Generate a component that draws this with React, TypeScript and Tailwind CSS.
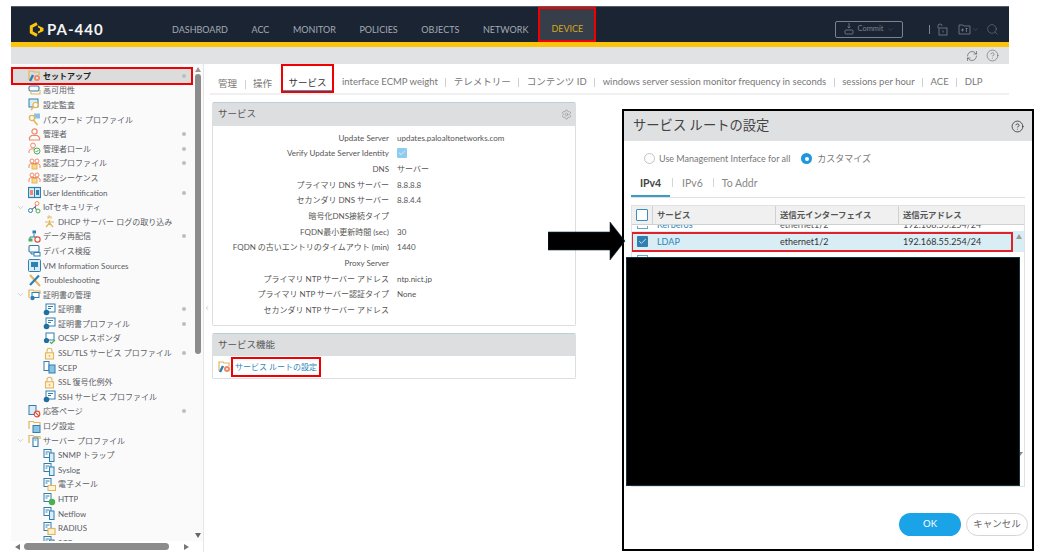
import { Check, ChevronDown, ChevronLeft, CircleHelp, RefreshCw, Search, Settings } from "lucide-react";

const BLUE = "#2f7fb0";
const LIGHT = "#8cc3e3";
const ORANGE = "#ef8a6a";
const GOLD = "#e3b65a";
const GREEN = "#4caf50";

function TreeIcon({ kind }: { kind: string }) {
  const common = { width: 13, height: 13, viewBox: "0 0 13 13", fill: "none", className: "shrink-0" };
  switch (kind) {
    case "setup":
      return (
        <svg {...common}>
          <path d="M1 11V2h4l1 1h5v3" stroke={GOLD} strokeWidth="1.2" />
          <path d="M2 12l3-6" stroke={BLUE} strokeWidth="2.4" />
          <circle cx="9" cy="9" r="3" fill={ORANGE} />
          <circle cx="9" cy="9" r="1" fill="#fff" />
        </svg>
      );
    case "ha":
      return (
        <svg {...common}>
          <rect x="1" y="2" width="10" height="5" rx="1.5" stroke={BLUE} strokeWidth="1.1" />
          <path d="M3 7v3h9V6" stroke={GOLD} strokeWidth="1.1" />
        </svg>
      );
    case "audit":
      return (
        <svg {...common}>
          <rect x="1" y="1" width="9" height="8" fill="#d9ecf7" stroke={BLUE} />
          <circle cx="7.5" cy="7" r="2.6" fill="#fff" stroke={GOLD} strokeWidth="1.3" />
          <path d="M5.5 9l-2.5 3" stroke={GOLD} strokeWidth="1.5" />
        </svg>
      );
    case "key":
      return (
        <svg {...common}>
          <rect x="6" y="0.5" width="6" height="5" fill={LIGHT} />
          <circle cx="4" cy="5" r="2.6" stroke={GOLD} strokeWidth="1.4" />
          <path d="M5.5 7l4 5" stroke={GOLD} strokeWidth="1.6" />
        </svg>
      );
    case "user":
      return (
        <svg {...common}>
          <circle cx="6.5" cy="3.5" r="2.6" stroke={ORANGE} strokeWidth="1.2" />
          <path d="M1.5 12V9.5l2-2h6l2 2V12z" stroke={ORANGE} strokeWidth="1.2" />
        </svg>
      );
    case "role":
      return (
        <svg {...common}>
          <circle cx="5" cy="3.5" r="2.4" stroke={ORANGE} />
          <path d="M1 11V8.5L3 7h4" stroke={ORANGE} />
          <circle cx="9" cy="9" r="3" fill="#fff" stroke={GREEN} />
          <path d="M7.6 9l1 1 1.8-2" stroke={GREEN} />
        </svg>
      );
    case "auth":
      return (
        <svg {...common}>
          <circle cx="4" cy="4" r="2" stroke={ORANGE} />
          <circle cx="9" cy="4" r="2" stroke={ORANGE} />
          <path d="M1 11V8l2-1.5h7L12 8v3" stroke={ORANGE} />
          <rect x="4" y="7.5" width="5" height="4.5" fill="#f6d98f" stroke={GOLD} />
        </svg>
      );
    case "uid":
      return (
        <svg {...common}>
          <rect x="0.5" y="1.5" width="12" height="10" fill="#d9ecf7" stroke={BLUE} strokeWidth="1.2" />
          <path d="M6.5 2v9" stroke={BLUE} />
          <rect x="2" y="4" width="3" height="5" fill={ORANGE} />
          <rect x="8" y="4" width="3" height="5" fill={BLUE} />
        </svg>
      );
    case "iot":
      return (
        <svg {...common}>
          <path d="M3 9l4-3 2-3M7 6l2 4" stroke="#555" />
          <circle cx="9" cy="2.5" r="2" fill="#fff" stroke={ORANGE} />
          <circle cx="2.5" cy="9.5" r="2" fill="#fff" stroke={BLUE} />
          <circle cx="10" cy="10" r="2" fill="#fff" stroke={GREEN} />
        </svg>
      );
    case "dhcp":
      return (
        <svg {...common}>
          <path d="M5 1v3M5 1h2v1.5H5M8 1v3" stroke={GOLD} strokeWidth="0.8" />
          <path d="M6.5 5v2M2 7h9M3 12l3.5-4 3.5 4" stroke={GOLD} strokeWidth="1.2" />
        </svg>
      );
    case "replay":
      return (
        <svg {...common}>
          <rect x="4.5" y="0.5" width="3.5" height="3" fill={BLUE} />
          <path d="M6 4v3M2 9V7h7v1" stroke={BLUE} />
          <rect x="0.5" y="8.5" width="4" height="3" fill={GREEN} />
          <circle cx="9.5" cy="9.5" r="2.6" fill="#fff" stroke="#e0533d" strokeWidth="1.2" />
        </svg>
      );
    case "device":
      return (
        <svg {...common}>
          <rect x="1" y="1.5" width="10" height="6.5" rx="1" stroke={BLUE} strokeWidth="1.1" />
          <path d="M3 8v2h3" stroke={BLUE} />
          <rect x="6" y="8.5" width="6" height="3.5" fill="#fff" stroke={BLUE} />
        </svg>
      );
    case "vm":
      return (
        <svg {...common}>
          <rect x="0.5" y="0.5" width="12" height="12" rx="1" fill="#d9ecf7" stroke={BLUE} />
          <rect x="3" y="3" width="7" height="5" fill={BLUE} />
          <path d="M6.5 8v3" stroke={BLUE} />
        </svg>
      );
    case "tools":
      return (
        <svg {...common}>
          <path d="M2 1l10 11" stroke={GOLD} strokeWidth="2" />
          <path d="M11 1.5L2 11" stroke={BLUE} strokeWidth="2.2" />
        </svg>
      );
    case "certfolder":
      return (
        <svg {...common}>
          <path d="M1 10V2h4l1 1h6v3" stroke={GOLD} strokeWidth="1.2" />
          <rect x="4" y="4.5" width="7" height="5" fill="#fff" stroke={BLUE} />
          <circle cx="4.5" cy="10" r="2.2" fill={BLUE} />
        </svg>
      );
    case "cert":
      return (
        <svg {...common}>
          <rect x="3" y="1" width="9" height="8" fill="#fff" stroke={BLUE} />
          <path d="M5 3.5h5M5 5.5h3" stroke={BLUE} />
          <circle cx="3.5" cy="9.5" r="2.8" fill="#1f6f9f" />
        </svg>
      );
    case "ocsp":
      return (
        <svg {...common}>
          <rect x="3" y="1" width="8" height="7" fill="#fff" stroke={BLUE} />
          <circle cx="3.5" cy="8.5" r="2.6" fill="#1f6f9f" />
          <path d="M7 10l1.5 1.5L12 8" stroke={GREEN} strokeWidth="1.2" />
        </svg>
      );
    case "lock":
      return (
        <svg {...common}>
          <path d="M4 6V3.8a2.5 2.5 0 0 1 5 0V6" stroke={GOLD} strokeWidth="1.1" />
          <rect x="2.5" y="5.8" width="8" height="6.2" fill="#fdf3d6" stroke={GOLD} strokeWidth="1.1" />
          <circle cx="6.5" cy="9" r="0.9" fill={GOLD} />
        </svg>
      );
    case "scep":
      return (
        <svg {...common}>
          <rect x="1" y="0.5" width="5" height="9" fill="#fff" stroke={BLUE} />
          <rect x="6" y="4" width="6" height="8" fill={LIGHT} stroke={BLUE} />
        </svg>
      );
    case "block":
      return (
        <svg {...common}>
          <rect x="1" y="0.5" width="7" height="9" fill="#d9ecf7" stroke={BLUE} />
          <circle cx="9" cy="9" r="2.8" fill="#fff" stroke="#e0533d" strokeWidth="1.2" />
          <path d="M7 7l4 4" stroke="#e0533d" strokeWidth="1.1" />
        </svg>
      );
    case "log":
      return (
        <svg {...common}>
          <path d="M1 9V1.5h4l1 1h6V5" stroke={GOLD} strokeWidth="1.2" />
          <rect x="5" y="5.5" width="7" height="7" fill={LIGHT} stroke={BLUE} />
        </svg>
      );
    case "serverfolder":
      return (
        <svg {...common}>
          <path d="M1 9V1.5h4l1 1h6V5" stroke={GOLD} strokeWidth="1.2" />
          <rect x="5" y="4" width="5" height="8.5" fill="#fff" stroke={BLUE} strokeWidth="1.1" />
          <path d="M6.5 6h2" stroke={BLUE} />
        </svg>
      );
    case "server":
    case "mail":
    case "http":
    case "radius":
      return (
        <svg {...common}>
          <rect x="1" y="0.5" width="7" height="8" fill="#fff" stroke={BLUE} />
          <path d="M2.5 3h4M2.5 5h2" stroke={BLUE} />
          {kind === "server" && <rect x="6.5" y="4" width="4.5" height="8.5" fill="#d9ecf7" stroke={BLUE} />}
          {kind === "mail" && <rect x="5" y="7.5" width="7.5" height="5" fill="#fdf3d6" stroke={GOLD} />}
          {kind === "http" && <circle cx="9" cy="9" r="3.2" fill={GREEN} />}
          {kind === "radius" && <rect x="5" y="6.5" width="7" height="6" fill="#fdf3d6" stroke={GOLD} strokeWidth="1.2" />}
        </svg>
      );
    default:
      return null;
  }
}

type Row = { label: string; icon: string; level: 1 | 2; dot?: boolean; open?: boolean; active?: boolean };

const rows: Row[] = [
  { label: "セットアップ", icon: "setup", level: 1, dot: true, active: true },
  { label: "高可用性", icon: "ha", level: 1 },
  { label: "設定監査", icon: "audit", level: 1 },
  { label: "パスワード プロファイル", icon: "key", level: 1 },
  { label: "管理者", icon: "user", level: 1, dot: true },
  { label: "管理者ロール", icon: "role", level: 1, dot: true },
  { label: "認証プロファイル", icon: "auth", level: 1, dot: true },
  { label: "認証シーケンス", icon: "auth", level: 1 },
  { label: "User Identification", icon: "uid", level: 1, dot: true },
  { label: "IoTセキュリティ", icon: "iot", level: 1, open: true },
  { label: "DHCP サーバー ログの取り込み", icon: "dhcp", level: 2 },
  { label: "データ再配信", icon: "replay", level: 1, dot: true },
  { label: "デバイス検疫", icon: "device", level: 1 },
  { label: "VM Information Sources", icon: "vm", level: 1 },
  { label: "Troubleshooting", icon: "tools", level: 1 },
  { label: "証明書の管理", icon: "certfolder", level: 1, open: true },
  { label: "証明書", icon: "cert", level: 2, dot: true },
  { label: "証明書プロファイル", icon: "cert", level: 2, dot: true },
  { label: "OCSP レスポンダ", icon: "ocsp", level: 2 },
  { label: "SSL/TLS サービス プロファイル", icon: "lock", level: 2, dot: true },
  { label: "SCEP", icon: "scep", level: 2 },
  { label: "SSL 復号化例外", icon: "lock", level: 2 },
  { label: "SSH サービス プロファイル", icon: "cert", level: 2 },
  { label: "応答ページ", icon: "block", level: 1, dot: true },
  { label: "ログ設定", icon: "log", level: 1 },
  { label: "サーバー プロファイル", icon: "serverfolder", level: 1, open: true },
  { label: "SNMP トラップ", icon: "server", level: 2 },
  { label: "Syslog", icon: "server", level: 2 },
  { label: "電子メール", icon: "mail", level: 2 },
  { label: "HTTP", icon: "http", level: 2 },
  { label: "Netflow", icon: "server", level: 2 },
  { label: "RADIUS", icon: "radius", level: 2 },
  { label: "SCP", icon: "server", level: 2 },
];

const navItems = ["DASHBOARD", "ACC", "MONITOR", "POLICIES", "OBJECTS", "NETWORK"];

const serviceRows = [
  ["Update Server", "updates.paloaltonetworks.com"],
  ["Verify Update Server Identity", ""],
  ["DNS", "サーバー"],
  ["プライマリ DNS サーバー", "8.8.8.8"],
  ["セカンダリ DNS サーバー", "8.8.4.4"],
  ["暗号化DNS接続タイプ", ""],
  ["FQDN最小更新時間 (sec)", "30"],
  ["FQDN の古いエントリのタイムアウト (min)", "1440"],
  ["Proxy Server", ""],
  ["プライマリ NTP サーバー アドレス", "ntp.nict.jp"],
  ["プライマリ NTP サーバー認証タイプ", "None"],
  ["セカンダリ NTP サーバー アドレス", ""],
];

const upperTabs = ["interface ECMP weight", "テレメトリー", "コンテンツ ID", "windows server session monitor frequency in seconds", "sessions per hour", "ACE", "DLP"];

function Sidebar() {
  return (
    <div className="relative flex w-[192px] shrink-0 flex-col">
      <div className="flex min-h-0 flex-1">
        <div className="w-[182px] shrink-0 overflow-hidden bg-[#fafafa] pt-[4.5px]">
          {rows.map((row) => (
            <div
              key={row.label}
              className={
                row.active
                  ? "relative z-10 flex h-[14.6px] items-center bg-[#dcdcdc] pr-[7px] font-bold text-[#222]"
                  : "flex h-[14.6px] items-center pr-[7px] text-[#5a6066]"
              }
            >
              {row.active && <span className="absolute -top-[1.5px] -bottom-[1.5px] left-0 right-0 border-2 border-[#f00000]" />}
              <div className={row.level === 1 ? "flex w-[17px] shrink-0 justify-start pl-[5px]" : "w-[32px] shrink-0"}>
                {row.open && <ChevronDown size={9} strokeWidth={1} className="text-[#888]" />}
              </div>
              <div className="flex min-w-0 flex-1 items-center gap-[1px]">
                <TreeIcon kind={row.icon} />
                <span className="truncate pl-[1px] text-[8px] leading-none">{row.label}</span>
              </div>
              {row.dot && <span className="h-[4px] w-[4px] shrink-0 rounded-full bg-[#bdbdbd]" />}
            </div>
          ))}
        </div>
        <div className="flex w-[10px] shrink-0 flex-col items-center bg-[#fafafa]">
          <div className="mt-[3px] h-0 w-0 border-x-[3.5px] border-b-[5px] border-x-transparent border-b-[#9a9a9a]" />
          <div className="mt-[2px] h-[280px] w-[6px] rounded-full bg-[#8c8c8c]" />
          <div className="flex-1" />
          <div className="mb-[3px] h-0 w-0 border-x-[3.5px] border-t-[5px] border-x-transparent border-t-[#666]" />
        </div>
      </div>
      <div className="flex h-[11px] shrink-0 items-center bg-white pl-[4px]">
        <div className="h-0 w-0 border-y-[3.5px] border-r-[5px] border-y-transparent border-r-[#777]" />
        <div className="ml-[4px] h-[7px] w-[145px] rounded-full bg-[#8c8c8c]" />
        <div className="ml-[15px] h-0 w-0 border-y-[3.5px] border-l-[5px] border-y-transparent border-l-[#777]" />
      </div>
    </div>
  );
}

function Separator() {
  return <span className="mx-[7.5px] h-[9px] w-px bg-[#cfd2d4]" />;
}

function ServicesPanel() {
  return (
    <div className="rounded-[2px] border border-[#dcdfe1] border-t-[#b8d0da] bg-white">
      <div className="flex h-[23px] items-center justify-between bg-[#dcdee0] pl-[5px] pr-[3px] text-[9.5px] text-[#555]">
        <span>サービス</span>
        <Settings size={11} strokeWidth={1} className="text-[#777]" />
      </div>
      <div className="pt-[4px] pb-[7px]">
        {serviceRows.map(([label, value]) => (
          <div key={label} className="flex h-[15.65px] items-center text-[8px] text-[#555]">
            <div className="w-[176px] shrink-0 whitespace-nowrap text-right">{label}</div>
            <div className="flex pl-[8px]">
              {label.startsWith("Verify") ? (
                <span className="flex h-[10px] w-[10px] items-center justify-center rounded-[1px] bg-[#8fcdf0]">
                  <Check size={8} strokeWidth={2} className="text-white" />
                </span>
              ) : (
                value
              )}
            </div>
          </div>
        ))}
      </div>
    </div>
  );
}

function Content() {
  return (
    <div className="min-w-0 flex-1 bg-white">
      <div className="flex h-[31px] items-end border-b-2 border-[#f0f0f0] pl-[8px] text-[9.5px] text-[#777]">
        <div className="flex h-[29px] items-center pt-[11px]">
          <span>管理</span>
          <Separator />
          <span>操作</span>
        </div>
        <div className="relative z-10 ml-[9px] flex h-[29px] w-[53px] shrink-0 items-center justify-center border-2 border-[#f00000] pt-[9px] text-[#333]">
          サービス
          <span className="absolute right-0 bottom-0 left-0 h-[1px] bg-[#3b9bc6]" />
        </div>
        <div className="flex h-[29px] items-center whitespace-nowrap pl-[8px] pt-[7px]">
          {upperTabs.map((tab, i) => (
            <span key={tab} className="flex items-center">
              {i > 0 && <Separator />}
              {tab}
            </span>
          ))}
        </div>
      </div>
      <div className="w-[366px] pt-[7px] pl-[2px]">
        <ServicesPanel />
        <div className="mt-[7px] rounded-[2px] border border-[#dcdfe1] border-t-[#b8d0da] bg-white">
          <div className="flex h-[22px] items-center bg-[#dcdee0] pl-[5px] text-[9.5px] text-[#555]">サービス機能</div>
          <div className="flex h-[22px] items-center pl-[5px]">
            <TreeIcon kind="setup" />
            <span className="flex h-[20px] items-center border-2 border-[#f00000] px-[2px] text-[8px] text-[#2a86b8]">
              サービス ルートの設定
            </span>
          </div>
        </div>
      </div>
    </div>
  );
}

function Header() {
  return (
    <div className="flex h-[36px] shrink-0 items-stretch border-t border-[#555d66] bg-[#1a2433]">
      <div className="flex w-[161px] shrink-0 items-center pt-[10px] pl-[18px]">
        <svg width="15" height="15" viewBox="0 0 15 15" fill="none">
          <path d="M8 1.6L2.3 4.6v5.8L8 13.4" stroke="#fcc40a" strokeWidth="3" />
          <path d="M9 3.5L14.5 6v3L9 11.5V9.5L11 8.5V6.5L9 5.5z" fill="#fcc40a" />
        </svg>
        <span className="ml-[3px] text-[15px] font-bold tracking-[1px] text-[#f2f3f4]">PA-440</span>
      </div>
      <div className="flex items-center gap-[23.6px] pt-[11px] text-[9px] text-[#a4abb3]">
        {navItems.map((item) => (
          <span key={item}>{item}</span>
        ))}
      </div>
      <div className="ml-[10px] flex w-[58px] items-center justify-center border-2 border-[#f00000] bg-[#353e49] pt-[9px] text-[9px] text-[#d4a81e]">
        DEVICE
      </div>
      <div className="flex flex-1 items-center justify-end pt-[9px] pr-[10px] text-[#7b838c]">
        <div className="flex h-[17px] w-[68px] items-center justify-center gap-[3px] rounded-[2px] border border-[#7b838c] text-[7.5px]">
          <svg width="10" height="12" viewBox="0 0 10 12" fill="none" stroke="currentColor" strokeWidth="0.8">
            <path d="M5 0v5M3.5 3.5L5 5l1.5-1.5" />
            <rect x="1" y="7" width="8" height="4" rx="1" />
          </svg>
          Commit
          <ChevronDown size={7} strokeWidth={1} />
        </div>
        <span className="ml-[26px] h-[9px] w-px bg-[#7b838c]" />
        <svg className="ml-[7px]" width="11" height="13" viewBox="0 0 11 13" fill="none" stroke="currentColor" strokeWidth="0.8">
          <path d="M1 5V3a2 2 0 0 1 4 0" />
          <rect x="2" y="5" width="8" height="7" />
          <path d="M6 7.5v2" />
        </svg>
        <svg className="ml-[10px]" width="13" height="11" viewBox="0 0 13 11" fill="none" stroke="currentColor" strokeWidth="0.8">
          <path d="M1 10V1h4l1 1h6v8z" />
          <path d="M3 6h3M4.5 4.5v3M8.5 4v4M7.5 5l1-1 1 1" />
        </svg>
        <ChevronDown size={7} strokeWidth={1.2} className="ml-[1px]" />
        <Search size={13} strokeWidth={1} className="ml-[7px]" />
      </div>
    </div>
  );
}

function ServiceRouteDialog() {
  return (
    <div className="absolute top-[109px] left-[622px] flex h-[442px] w-[412px] flex-col border-2 border-black bg-white text-[#555]">
      <div className="flex h-[30px] shrink-0 items-center justify-between bg-[#dfe0e2] pr-[8px] pl-[9px] text-[#444]">
        <span className="text-[13.3px]">サービス ルートの設定</span>
        <CircleHelp size={13} strokeWidth={1.5} className="text-[#333]" />
      </div>
      <div className="flex h-[35px] shrink-0 items-center pl-[20px] text-[9px] text-[#777]">
        <span className="h-[11px] w-[11px] rounded-full border border-[#c4c4c4]" />
        <span className="ml-[4px]">Use Management Interface for all</span>
        <span className="ml-[11px] flex h-[11px] w-[11px] items-center justify-center rounded-full bg-[#1f97df]">
          <span className="h-[4px] w-[4px] rounded-full bg-white" />
        </span>
        <span className="ml-[5px]">カスタマイズ</span>
      </div>
      <div className="mx-[7px] flex h-[22px] shrink-0 items-start border-b border-[#dfe1e3] text-[10.5px] text-[#888]">
        <span className="flex h-[21px] w-[39px] justify-center border-b-2 border-[#3b9bc6] font-bold text-[#444]">IPv4</span>
        <span className="mt-[2px] ml-[2px] h-[9px] w-px bg-[#d5d5d5]" />
        <span className="ml-[9px]">IPv6</span>
        <span className="mt-[2px] ml-[10px] h-[9px] w-px bg-[#d5d5d5]" />
        <span className="ml-[8px]">To Addr</span>
      </div>
      <div className="relative mx-[7px] mt-[7px] h-[282px] shrink-0 overflow-hidden border border-[#dfe1e3] text-[9px]">
        <div className="flex h-[19px] items-center border-b border-[#d0d0d0] bg-[#f0f0f0] text-[8.4px] font-bold">
          <div className="flex h-full w-[21px] items-center justify-center border-r border-[#d0d0d0]">
            <span className="h-[12px] w-[12px] rounded-[1px] border-[1.5px] border-[#3a8fc0] bg-white" />
          </div>
          <div className="flex h-full w-[123px] items-center border-r border-[#d0d0d0] pl-[4px]">サービス</div>
          <div className="flex h-full w-[123px] items-center border-r border-[#d0d0d0] pl-[4px]">送信元インターフェイス</div>
          <div className="flex h-full w-[123px] items-center pl-[4px]">送信元アドレス</div>
        </div>
        {/* row scrolled away under the table header, only its lower edge is left */}
        <div className="h-[6px]">
          <div className="flex h-[4px] items-end overflow-hidden leading-none text-[#555]">
            <div className="flex w-[21px] shrink-0 justify-center">
              <span className="h-[3px] w-[11px] border-x border-b border-[#6aa6c9]" />
            </div>
            <div className="w-[123px] pl-[4px] text-[#2a86b8]">Kerberos</div>
            <div className="w-[123px] pl-[4px]">ethernet1/2</div>
            <div className="w-[123px] pl-[4px]">192.168.55.254/24</div>
          </div>
        </div>
        <div className="relative flex h-[21px] items-center bg-[#d9edf5] text-[#333]">
          <div className="flex w-[21px] shrink-0 justify-center">
            <span className="flex h-[11px] w-[11px] items-center justify-center rounded-[1px] bg-[#2f7fb0]">
              <Check size={9} strokeWidth={2} className="text-white" />
            </span>
          </div>
          <div className="w-[123px] pl-[4px] text-[#2a86b8]">LDAP</div>
          <div className="w-[123px] pl-[4px]">ethernet1/2</div>
          <div className="w-[123px] pl-[4px]">192.168.55.254/24</div>
          <div className="absolute top-[1px] right-[11px] bottom-0 left-[-1px] border-[2.5px] border-[#e0202a]" />
          <div className="absolute top-[3px] right-[2px] h-0 w-0 border-x-[3.5px] border-b-[5px] border-x-transparent border-b-[#9a9a9a]" />
        </div>
        <div className="flex h-[5px] justify-start pt-[3px]">
          <div className="flex w-[21px] justify-center">
            <span className="h-[3px] w-[11px] border-x border-t border-[#6aa6c9]" />
          </div>
        </div>
        <div className="absolute right-[1px] bottom-[30px] h-0 w-0 border-x-[3px] border-t-[4px] border-x-transparent border-t-[#888]" />
      </div>
      <div className="flex flex-1 items-center justify-end gap-[5px] pt-[13px] pr-[4px]">
        <button className="h-[23px] w-[62px] rounded-full bg-[#1ba3e8] text-[9.5px] text-white">OK</button>
        <button className="h-[23px] w-[62px] rounded-full border border-[#d5d5d5] bg-white text-[9.5px] text-[#666]">キャンセル</button>
      </div>
    </div>
  );
}

export default function App() {
  return (
    <div className="relative h-[556px] w-[1044px] overflow-hidden bg-white font-['Lato','Noto_Sans_CJK_JP',sans-serif]">
      <div className="ml-[11px] flex h-[552px] w-[998px] flex-col pt-[6px]">
        <Header />
        <div className="h-[5px] shrink-0 bg-[#fcc40a]" />
        <div className="flex h-[17px] shrink-0 items-center justify-end gap-[8px] bg-[#e1e2e4] pr-[10px] text-[#555]">
          <RefreshCw size={12} strokeWidth={1.3} />
          <CircleHelp size={13} strokeWidth={1} />
        </div>
        <div className="flex min-h-0 flex-1">
          <Sidebar />
          <div className="flex w-[7px] shrink-0 items-center justify-center border-l border-[#e6e6e6]">
            <ChevronLeft size={6} className="text-[#999]" />
          </div>
          <Content />
        </div>
      </div>

      {/* annotations pasted over the screenshot */}
      <ServiceRouteDialog />
      <div className="absolute top-[257px] left-[626px] h-[229px] w-[394px] border border-[#12323f] bg-black" />
      <svg className="absolute top-[221px] left-[548px]" width="78" height="40" viewBox="0 0 78 40">
        <path d="M0 11h62V1l15 19-15 19V29H0z" fill="#000" stroke="#17303c" strokeWidth="0.6" />
      </svg>
    </div>
  );
}
